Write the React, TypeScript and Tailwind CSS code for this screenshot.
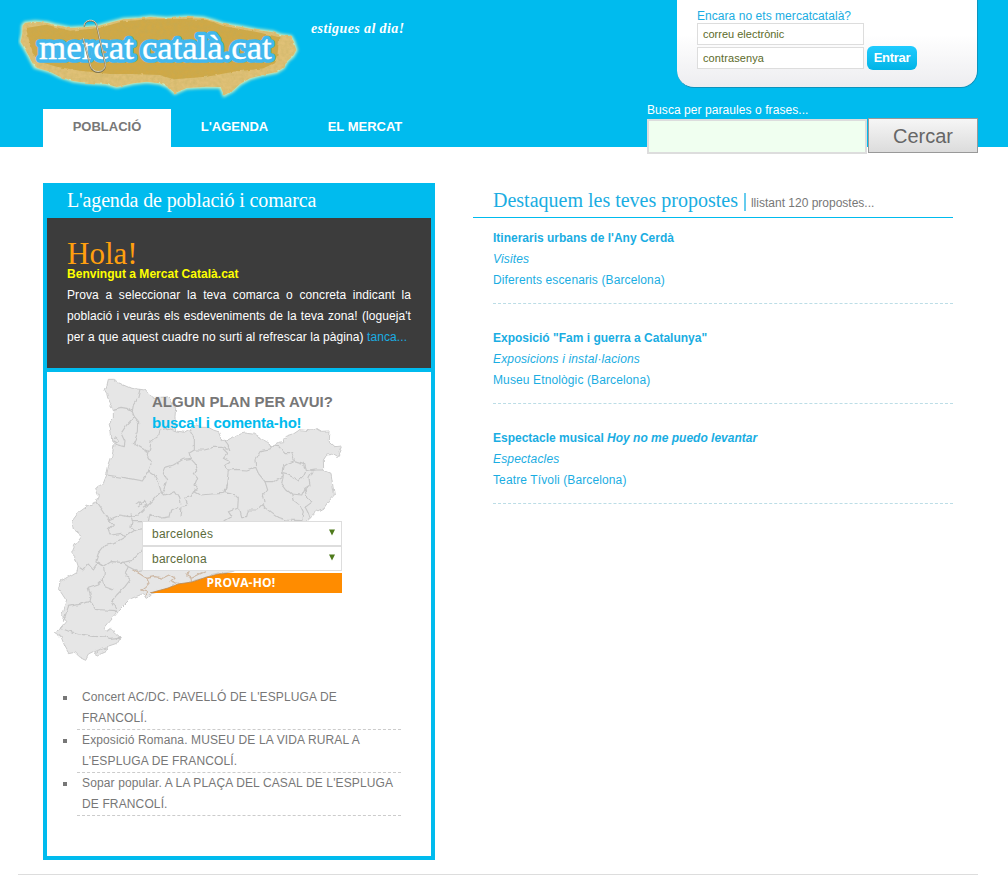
import React from "react";

const TORN =
  "M68,77 L75,69 L105,65 L140,68 L165,75 L210,84 L250,82 L295,78 L330,68 L370,58 L420,55 L450,51 L500,55 L560,51 L610,54 L640,62 L670,72 L720,80 L770,90 L820,97 L840,105 L873,110 L881,125 L889,150 L879,168 L862,183 L850,203 L830,216 L790,224 L750,235 L720,252 L698,272 L672,286 L662,261 L620,260 L560,264 L524,280 L505,261 L480,250 L440,245 L400,250 L350,261 L320,252 L260,248 L220,243 L180,230 L150,215 L120,206 L105,202 L97,188 L85,165 L72,142 L62,125 L67,100 Z";

function Logo() {
  return (
    <svg className="block h-[100px] w-[293px]" viewBox="0 0 879 300">
      <defs>
        <filter id="torn" x="-5%" y="-10%" width="110%" height="120%">
          <feTurbulence type="fractalNoise" baseFrequency="0.05" numOctaves="2" seed="4" />
          <feDisplacementMap in="SourceGraphic" scale="8" xChannelSelector="R" yChannelSelector="G" />
        </filter>
        <filter id="glow" x="-5%" y="-15%" width="110%" height="130%">
          <feGaussianBlur stdDeviation="4" />
        </filter>
        <filter id="grain" x="0" y="0" width="100%" height="100%">
          <feTurbulence type="fractalNoise" baseFrequency="0.09" numOctaves="2" seed="7" result="n" />
          <feColorMatrix in="n" type="matrix" values="0 0 0 0 0.5  0 0 0 0 0.4  0 0 0 0 0.1  0.7 0 0 0 -0.22" result="g" />
          <feComposite in="g" in2="SourceGraphic" operator="in" result="gi" />
          <feMerge>
            <feMergeNode in="SourceGraphic" />
            <feMergeNode in="gi" />
          </feMerge>
        </filter>
      </defs>
      <g transform="translate(-54 0)">
        <path d={TORN} fill="#e8edb0" stroke="#cdeec0" strokeWidth="9" filter="url(#glow)" />
        <g filter="url(#torn)">
          <path d={TORN} fill="#e0c177" filter="url(#grain)" />
          <path
            d="M78,84 L140,74 L210,92 L295,85 L370,64 L450,58 L560,57 L620,60 L670,78 L770,96 L838,112 L832,165 L822,190 L790,205 L700,215 L620,230 L520,238 L480,225 L400,222 L330,222 L240,212 L170,200 L120,185 L98,160 L90,130 Z"
            fill="#d0a947"
            filter="url(#grain)"
          />
        </g>
        <g fontFamily="'Liberation Serif', serif" fontSize="104">
          <text x="117" y="178" textLength="285" lengthAdjust="spacingAndGlyphs" fill="#41b8ee" stroke="#41b8ee" strokeWidth="23" strokeLinejoin="round">mercat</text>
          <text x="426" y="178" textLength="389" lengthAdjust="spacingAndGlyphs" fill="#41b8ee" stroke="#41b8ee" strokeWidth="23" strokeLinejoin="round">català.cat</text>
          <text x="117" y="178" textLength="285" lengthAdjust="spacingAndGlyphs" fill="#fff" stroke="#fff" strokeWidth="1">mercat</text>
          <text x="426" y="178" textLength="389" lengthAdjust="spacingAndGlyphs" fill="#fff" stroke="#fff" strokeWidth="1">català.cat</text>
        </g>
        <g fill="none" strokeLinecap="round">
          <path d="M253,78 C253,60 284,55 290,76 L316,192 C318,222 280,224 272,200 L250,117" stroke="#7d7350" strokeWidth="5" />
          <path d="M252,76 C252,58 284,53 290,74 L316,190 C318,220 280,222 272,198 L250,115" stroke="#dedccb" strokeWidth="2.6" />
        </g>
      </g>
    </svg>
  );
}

const LAND =
  "M190,28 L205,28 L212,34 L235,45 L258,55 L285,58 L300,60 L312,75 L325,82 L350,82 L368,80 L380,92 L392,115 L390,140 L392,183 L418,187 L432,178 L440,168 L455,165 L470,172 L490,172 L505,180 L520,185 L528,205 L540,215 L555,208 L575,195 L600,189 L625,192 L645,205 L665,215 L685,228 L700,220 L716,218 L715,208 L724,199 L745,192 L765,179 L790,182 L815,175 L830,184 L852,183 L850,212 L870,230 L893,228 L885,248 L875,262 L860,253 L845,255 L835,270 L836,300 L858,310 L864,350 L868,375 L850,395 L838,412 L815,425 L795,445 L780,460 L720,520 L640,570 L562,605 L520,612 L485,620 L440,635 L400,641 L370,655 L320,668 L305,682 L290,673 L260,685 L220,725 L190,760 L178,775 L186,784 L198,776 L212,790 L226,802 L215,820 L185,830 L160,840 L130,855 L122,871 L100,860 L85,845 L70,848 L60,830 L48,800 L28,787 L48,775 L65,755 L50,735 L55,715 L65,690 L42,655 L45,635 L70,620 L95,605 L100,590 L90,560 L80,550 L90,525 L110,500 L85,480 L80,455 L100,428 L125,410 L152,395 L160,375 L152,355 L175,340 L185,315 L190,290 L200,260 L207,225 L200,210 L198,185 L192,160 L205,145 L205,120 L192,100 L185,70 L180,62 L186,45 Z";

const BORDERS = [
  "M285,58 L278,85 L265,105 L262,125 L245,115 L228,112 L205,118",
  "M262,125 L268,140 L245,165 L228,190 L240,215 L238,230 L207,222",
  "M204,205 L214,203 L220,211 L212,218 L203,212",
  "M268,140 L281,155 L280,185 L265,220 L290,235 L312,245 L318,215 L338,200 L342,180 L370,175 L392,183",
  "M312,245 L308,262 L320,280 L310,305 L292,333 L250,325 L185,315",
  "M310,300 L325,310 L340,335 L348,360 L355,375 L375,370 L390,362 L402,378 L408,400",
  "M432,178 L448,205 L448,240 L432,250 L436,265 L415,268 L385,285 L362,292 L355,310 L365,330 L358,355 L350,372",
  "M448,240 L475,240 L505,232 L530,232 L555,240 L548,225 L540,215",
  "M436,265 L450,280 L458,300 L445,310 L458,325 L450,345 L460,355 L446,362 L435,380 L420,385 L428,405 L408,410 L405,440",
  "M530,232 L548,250 L535,265 L555,275 L538,285 L550,300 L545,340 L535,370 L500,372 L470,375 L446,362",
  "M550,300 L580,298 L605,300 L632,292 L640,310 L660,335 L685,335 L715,318 L710,305",
  "M632,292 L630,270 L645,245 L675,240 L680,228 L705,230 L720,248 L740,248 L748,272 L730,280 L715,290 L710,310 L730,315 L750,325 L762,333 L775,320 L782,305 L775,280 L748,272",
  "M782,305 L810,300 L836,300",
  "M715,318 L710,340 L725,360 L740,372 L770,375 L780,355 L795,345 L792,325 L803,305",
  "M780,355 L785,380 L800,395 L780,410 L790,430 L795,445",
  "M545,340 L540,365 L565,370 L580,385 L578,415 L585,420 L590,440 L605,440 L610,420 L635,420 L645,410 L660,395 L655,375 L668,360 L660,335",
  "M650,405 L675,425 L695,440 L725,450 L770,452 L775,425 L765,405 L745,390 L740,372",
  "M578,415 L550,425 L560,440 L540,452 L550,460",
  "M152,395 L170,420 L190,450 L225,435 L250,440 L280,435 L305,410 L320,395 L348,365",
  "M275,400 L285,392 L290,402 L282,408 M290,402 L298,394 L306,404 L294,412",
  "M255,430 L262,455 L310,455 L315,430 L345,445 L375,440 L380,420 L400,410",
  "M190,450 L205,465 L190,480 L195,495 L230,490 L240,500 L270,480 L300,475",
  "M262,455 L258,470 L270,480",
  "M240,500 L215,515 L180,525 L160,550 L152,575 L175,590 L198,575 L230,577 L262,572 L270,560 L290,540",
  "M100,590 L115,600 L130,582 L145,600 L160,580 L175,590 L178,605 L175,630",
  "M232,577 L250,590 L240,610 L255,630 L240,650 L215,675 L200,695 L215,722 L180,720 L148,718 L135,695 L100,703 L70,710 L55,755",
  "M135,695 L138,680 L130,655 L160,645 L175,630 L180,650 L205,660",
  "M250,590 L280,605 L300,600",
  "M48,775 L75,785 L110,793 L150,800 L180,798 L195,805 L225,802",
];

const COAST_BORDERS =
  "M262,600 L285,612 L305,625 L312,640 L300,652 L290,660 L305,665 L300,678 M305,625 L330,620 L355,625 L375,615 L390,625 L378,635 L395,642 M430,605 L425,618 L438,625 L440,638 M440,625 L465,612 L480,605";

function CatalunyaMap() {
  return (
    <svg className="absolute left-0 top-0 h-[298px] w-[308px]" viewBox="6 6 924 894" aria-hidden="true">
      <defs>
        <filter id="wiggle" filterUnits="userSpaceOnUse" x="0" y="0" width="930" height="900">
          <feTurbulence type="fractalNoise" baseFrequency="0.045" numOctaves="2" seed="3" />
          <feDisplacementMap in="SourceGraphic" scale="13" xChannelSelector="R" yChannelSelector="G" />
        </filter>
      </defs>
      <g filter="url(#wiggle)" strokeLinejoin="round" fill="none">
        <path d={LAND} fill="#e6e6e6" stroke="#cbcbcb" strokeWidth="3" />
        {BORDERS.map((d) => (
          <path key={d} d={d} stroke="#c6c6c6" strokeWidth="3.4" />
        ))}
        <path d={COAST_BORDERS} stroke="#cdb8a4" strokeWidth="3.4" />
        <path d="M148,850 L165,840 L188,832 L180,848 L160,856 Z" fill="#e6e6e6" stroke="#cbcbcb" strokeWidth="3" />
      </g>
    </svg>
  );
}

function Header() {
  return (
    <header className="h-[147px] bg-[#00bbee]">
      <div className="ml-[18px] flex h-full w-[960px] justify-between">
        <div className="flex flex-col justify-between">
          <div className="flex">
            <Logo />
            <p className="mt-[20px] font-['Liberation_Serif',serif] text-[14px] leading-[18px] font-bold tracking-[0.4px] text-white italic">
              estigues al dia!
            </p>
          </div>
          <nav className="ml-[25px] flex h-[38px] text-[13px] leading-[35px] font-bold text-white">
            <a className="w-[128px] bg-white text-center text-[#777]">POBLACIÓ</a>
            <a className="w-[127px] text-center">L'AGENDA</a>
            <a className="w-[134px] text-center">EL MERCAT</a>
          </nav>
        </div>
        <div className="flex w-[331px] flex-col items-end">
          <form className="h-[88px] w-[301px] shrink-0 rounded-b-[17px] border-r border-b border-[#0d93bd] bg-gradient-to-b from-white from-40% to-[#ededf0] pt-[9px] pl-[20px] text-[12px]">
            <p className="h-[14px] leading-[14px] tracking-[0.05px] text-[#1aade2]">Encara no ets mercatcatalà?</p>
            <div className="flex h-[22px] w-[167px] items-center border border-[#ddd] bg-white px-[5px] text-[11px] text-[#5c6b2a]">correu electrònic</div>
            <div className="flex gap-[3px]">
              <div className="mt-[2px] flex h-[22px] w-[167px] items-center border border-[#ddd] bg-white px-[5px] text-[11px] tracking-[0.1px] text-[#5c6b2a]">contrasenya</div>
              <button type="button" className="mt-px h-[24px] w-[50px] rounded-[6px] bg-gradient-to-b from-[#1fcbff] to-[#00b4e6] text-[13px] leading-[22px] font-bold tracking-[-0.3px] text-white">Entrar</button>
            </div>
          </form>
          <form className="mt-[15px] w-[331px] shrink-0">
            <p className="h-[15px] text-[12px] leading-[15px] tracking-[0.07px] text-white">Busca per paraules o frases...</p>
            <div className="flex">
              <div className="mt-px h-[35px] w-[220px] shrink-0 border-2 border-[#ddd] bg-[#f0fff0]" />
              <button type="button" className="ml-px h-[35px] w-[110px] shrink-0 border border-[#999] bg-gradient-to-b from-[#f6f6f6] to-[#dcdcdc] text-[20px] leading-[32px] text-[#666]">Cercar</button>
            </div>
          </form>
        </div>
      </div>
    </header>
  );
}

function Select({ value }: { value: string }) {
  return (
    <div className="flex h-[25px] w-[200px] items-center justify-between border border-[#ddd] bg-white pr-[6px] pl-[9px] text-[12px] tracking-[0.25px] text-[#5c6b3a]">
      {value}
      <svg className="mb-[2px] h-[7px] w-[6px]" viewBox="0 0 6 7">
        <path d="M0,0.5 H6 L3,6.5 Z" fill="#4f7a1c" />
      </svg>
    </div>
  );
}

const EVENTS = [
  "Concert AC/DC. PAVELLÓ DE L'ESPLUGA DE FRANCOLÍ.",
  "Exposició Romana. MUSEU DE LA VIDA RURAL A L'ESPLUGA DE FRANCOLÍ.",
  "Sopar popular. A LA PLAÇA DEL CASAL DE L'ESPLUGA DE FRANCOLÍ.",
];

function Agenda() {
  return (
    <section className="h-[677px] w-[392px] border-4 border-t-0 border-[#00bbee] bg-white">
      <h2 className="h-[35px] bg-[#00bbee] pl-[20px] font-['Liberation_Serif',serif] text-[20px] leading-[35px] tracking-[-0.14px] whitespace-nowrap text-white">
        L'agenda de població i comarca
      </h2>
      <div className="h-[154px] border-b-4 border-[#00bbee] bg-[#3c3c3c] px-[20px] pt-[20px]">
        <h3 className="h-[29px] font-['Liberation_Serif',serif] text-[31px] leading-[31px] text-[#ff9f0f]">Hola!</h3>
        <p className="h-[18px] text-[12px] leading-[15px] font-bold tracking-[0.03px] text-[#ffff00]">Benvingut a Mercat Català.cat</p>
        <p className="w-[344px] text-justify text-[12px] leading-[21px] tracking-[0.08px] text-white">
          Prova a seleccionar la teva comarca o concreta indicant la població i veuràs els esdeveniments de la teva zona! (logueja't <span className="inline-block text-left whitespace-nowrap">per a que aquest cuadre no surti al refrescar la pàgina) <a className="text-[#1aade2]">tanca...</a></span>
        </p>
      </div>
      <div className="relative h-[315px]">
        <CatalunyaMap />
        <div className="relative ml-[95px] pt-[19px]">
          <div className="ml-[10px] h-[130px] text-[15px] leading-[21px] font-bold">
            <p className="text-[#777]">ALGUN PLAN PER AVUI?</p>
            <p className="tracking-[-0.2px] text-[#00bbee]">busca'l i comenta-ho!</p>
          </div>
          <Select value="barcelonès" />
          <Select value="barcelona" />
          <button type="button" className="relative mt-[2px] block h-[20px] w-[200px] text-[12px] leading-[20px] font-bold text-white">
            <svg className="absolute inset-0 h-[20px] w-[200px]" viewBox="0 0 200 20">
              <path d="M85,0 L76,1 L65,4 L50,9 L36,11 L26,15 L8,20 H200 V0 Z" fill="#ff8c00" />
              <path d="M85,0.5 L76,1 L65,4 L50,9 L36,11 L26,15 L8,20" fill="none" stroke="#b98a55" strokeWidth="0.8" />
            </svg>
            <span className="relative -left-px font-['Open_Sans',sans-serif] tracking-[0.2px]">PROVA-HO!</span>
          </button>
        </div>
      </div>
      <ul className="ml-[30px] w-[324px] text-[12px] leading-[21px] tracking-[0.13px] text-[#777]">
        {EVENTS.map((event) => (
          <li key={event} className="relative h-[43px] border-b border-dashed border-[#ccc] pr-[4px] pl-[5px]">
            <span className="absolute top-[9px] -left-[14px] size-[4px] bg-[#777]" />
            {event}
          </li>
        ))}
      </ul>
    </section>
  );
}

const PROPOSALS = [
  { title: "Itineraris urbans de l'Any Cerdà", kind: "Visites", place: "Diferents escenaris (Barcelona)" },
  { title: 'Exposició "Fam i guerra a Catalunya"', kind: "Exposicions i instal·lacions", place: "Museu Etnològic (Barcelona)" },
  { title: "Espectacle musical ", work: "Hoy no me puedo levantar", kind: "Espectacles", place: "Teatre Tívoli (Barcelona)" },
];

function Proposals() {
  return (
    <section className="w-[480px]">
      <div className="flex h-[35px] items-baseline border-b border-[#00bbee] pl-[20px] leading-[35px]">
        <h2 className="mr-[6px] font-['Liberation_Serif',serif] text-[20px] text-[#1aade2]">Destaquem les teves propostes</h2>
        <span className="inline-block h-[18px] w-[2px] translate-y-[4px] bg-[#66ccee]" />
        <span className="ml-[5px] text-[12px] text-[#777]">llistant 120 propostes...</span>
      </div>
      <div className="ml-[20px] text-[12px] leading-[21px] text-[#1aade2]">
        {PROPOSALS.map((p) => (
          <article key={p.title} className="mb-[14px] h-[86px] border-b border-dashed border-[#bcdde6] pt-[10px]">
            <h3 className="font-bold">
              {p.title}
              {p.work && <em>{p.work}</em>}
            </h3>
            <p className="tracking-[0.15px] italic">{p.kind}</p>
            <p className="tracking-[0.12px]">{p.place}</p>
          </article>
        ))}
      </div>
    </section>
  );
}

export default function App() {
  return (
    <div className="h-[880px] overflow-hidden bg-white font-['Liberation_Sans',Arial,sans-serif]">
      <Header />
      <main className="ml-[18px] h-[728px] w-[960px] border-b border-[#ddd] pt-[36px] pl-[25px]">
        <div className="flex gap-[38px]">
          <Agenda />
          <Proposals />
        </div>
      </main>
    </div>
  );
}
